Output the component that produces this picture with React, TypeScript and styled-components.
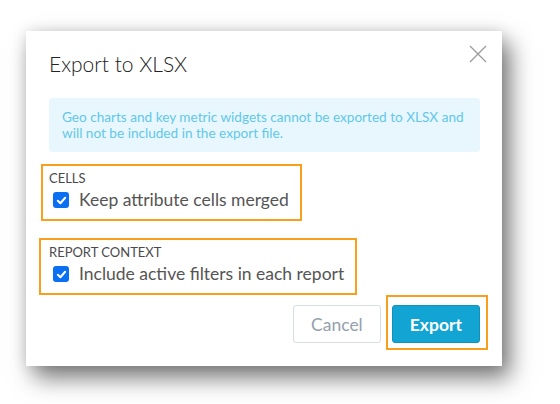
import styled, { createGlobalStyle } from "styled-components";

const Global = createGlobalStyle`
  html, body {
    margin: 0;
    padding: 0;
    background: #ffffff;
    font-family: Lato, "Open Sans", "Liberation Sans", sans-serif;
  }
`;

const Page = styled.div`
  width: 560px;
  height: 404px;
  overflow: hidden;
  padding: 31px 0 0 26px;
  box-sizing: border-box;
`;

const Dialog = styled.div`
  width: 476px;
  height: 335px;
  box-sizing: border-box;
  background: #fff;
  padding: 20px 22px 0 23px;
  display: flex;
  flex-direction: column;
  box-shadow: 8px 12px 22px rgba(0, 0, 0, 0.52), 0 0 14px rgba(0, 0, 0, 0.12);
`;

const Header = styled.div`
  display: flex;
  justify-content: space-between;
  align-items: flex-start;
`;

const Title = styled.h2`
  margin: 0;
  font-size: 21px;
  line-height: 25px;
  font-weight: 300;
  color: #222;
`;

const Close = styled.button`
  border: 0;
  background: none;
  padding: 0;
  margin: -6px -7px 0 0;
  width: 18px;
  height: 18px;
  cursor: pointer;
`;

const Info = styled.div`
  margin-top: 22px;
  padding: 11px 13px;
  border-radius: 4px;
  background: #e8f7fd;
  color: #62c7ea;
  font-size: 13.6px;
  line-height: 16px;
`;

const Highlight = styled.div<{ $shift: number; $top: number }>`
  align-self: flex-start;
  margin: ${(p) => p.$top}px 0 0 ${(p) => p.$shift}px;
  border: 2px solid #f8a01e;
  padding: 5px 11px 9px ${(p) => -p.$shift - 2}px;
`;

const Label = styled.div`
  font-size: 13px;
  line-height: 14px;
  color: #4a4a4a;
  text-transform: uppercase;
`;

const Row = styled.label`
  display: flex;
  align-items: center;
  gap: 10px;
  margin: 5px 0 0 4px;
  font-size: 17.5px;
  line-height: 20px;
  color: #555;
`;

const Box = styled.span`
  width: 16px;
  height: 16px;
  border-radius: 3px;
  background: #0b6ff2;
  display: flex;
  align-items: center;
  justify-content: center;
`;

const Actions = styled.div`
  display: flex;
  justify-content: flex-end;
  align-items: center;
  gap: 11px;
  margin-top: 10px;
`;

const Button = styled.button<{ $primary?: boolean }>`
  height: 38px;
  padding: 0 17px;
  border-radius: 3px;
  font-family: inherit;
  font-size: 17.5px;
  font-weight: ${(p) => (p.$primary ? 700 : 400)};
  color: ${(p) => (p.$primary ? "#fff" : "#94a1ad")};
  background: ${(p) => (p.$primary ? "#12a4d2" : "#fff")};
  border: 1px solid ${(p) => (p.$primary ? "#0f93bd" : "#d6dde3")};
  cursor: pointer;
`;

const Mark = styled.div`
  border: 2px solid #f8a01e;
  padding: 8px 6px 5px 4px;
  margin: -10px -8px -7px -6px;
  display: flex;
`;

const Check = () => (
  <Box>
    <svg width="11" height="11" viewBox="0 0 12 12">
      <path d="M2 6.3 L4.8 9 L10 3" fill="none" stroke="#fff" strokeWidth="2.2" strokeLinecap="round" strokeLinejoin="round" />
    </svg>
  </Box>
);

const App = () => {
  return (
    <Page>
      <Global />
      <Dialog>
        <Header>
          <Title>Export to XLSX</Title>
          <Close aria-label="close">
            <svg width="18" height="18" viewBox="0 0 18 18">
              <path d="M1 1 L17 17 M17 1 L1 17" stroke="#9a9a9a" strokeWidth="1.2" />
            </svg>
          </Close>
        </Header>

        <Info>
          Geo charts and key metric widgets cannot be exported to XLSX and will not be included in the export file.
        </Info>

        <Highlight $shift={-8} $top={12}>
          <Label>Cells</Label>
          <Row>
            <Check />
            Keep attribute cells merged
          </Row>
        </Highlight>

        <Highlight $shift={-10} $top={17}>
          <Label>Report context</Label>
          <Row>
            <Check />
            Include active filters in each report
          </Row>
        </Highlight>

        <Actions>
          <Button>Cancel</Button>
          <Mark>
            <Button $primary>Export</Button>
          </Mark>
        </Actions>
      </Dialog>
    </Page>
  );
};

export default App;
